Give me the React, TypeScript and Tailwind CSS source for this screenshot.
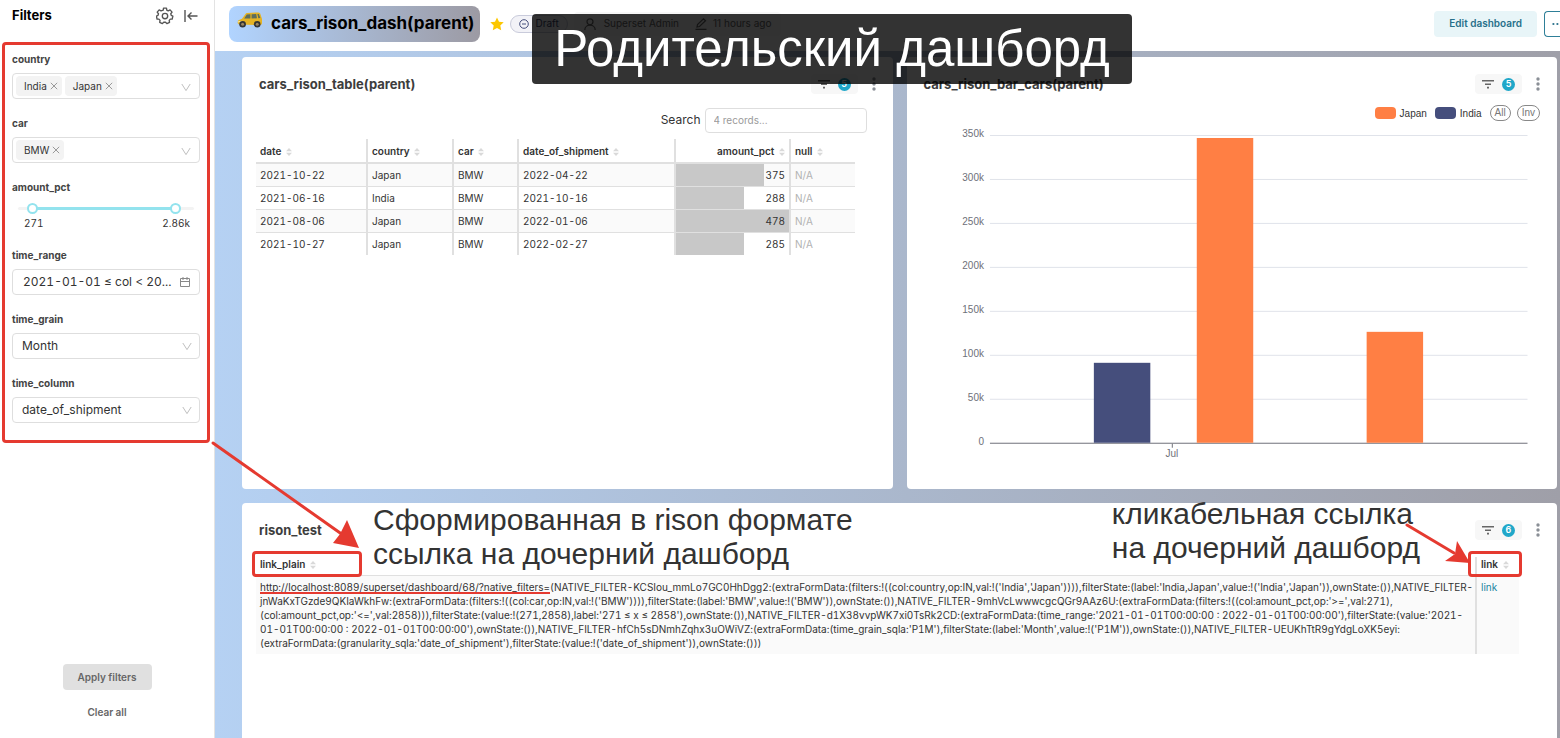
import { useState } from "react";
import type { ReactNode } from "react";

type ShipmentRow = {
    date: string;
    country: string;
    car: string;
    shipped: string;
    amount: number;
    bar: number;
};

const rows: ShipmentRow[] = [
    { date: "2021-10-22", country: "Japan", car: "BMW", shipped: "2022-04-22", amount: 375, bar: 78 },
    { date: "2021-06-16", country: "India", car: "BMW", shipped: "2021-10-16", amount: 288, bar: 60 },
    { date: "2021-08-06", country: "Japan", car: "BMW", shipped: "2022-01-06", amount: 478, bar: 100 },
    { date: "2021-10-27", country: "Japan", car: "BMW", shipped: "2022-02-27", amount: 285, bar: 60 },
];

const yLabels = ["350k", "300k", "250k", "200k", "150k", "100k", "50k", "0"];

const bars = [
    { x: 187, top: 237, color: "#454e7c" },
    { x: 290, top: 12, color: "#ff7f44" },
    { x: 460, top: 206, color: "#ff7f44" },
];

const baseUrl = "http://localhost:8089/superset/dashboard/68/?native_filters=";

const risonLines = [
    "(NATIVE_FILTER-KCSIou_mmLo7GC0HhDgg2:(extraFormData:(filters:!((col:country,op:IN,val:!('India','Japan')))),filterState:(label:'India,Japan',value:!('India','Japan')),ownState:()),NATIVE_FILTER-",
    "jnWaKxTGzde9QKIaWkhFw:(extraFormData:(filters:!((col:car,op:IN,val:!('BMW')))),filterState:(label:'BMW',value:!('BMW')),ownState:()),NATIVE_FILTER-9mhVcLwwwcgcQGr9AAz6U:(extraFormData:(filters:!((col:amount_pct,op:'>=',val:271),",
    "(col:amount_pct,op:'<=',val:2858))),filterState:(value:!(271,2858),label:'271 ≤ x ≤ 2858'),ownState:()),NATIVE_FILTER-d1X38vvpWK7xi0TsRk2CD:(extraFormData:(time_range:'2021-01-01T00:00:00 : 2022-01-01T00:00:00'),filterState:(value:'2021-",
    "01-01T00:00:00 : 2022-01-01T00:00:00'),ownState:()),NATIVE_FILTER-hfCh5sDNmhZqhx3uOWiVZ:(extraFormData:(time_grain_sqla:'P1M'),filterState:(label:'Month',value:!('P1M')),ownState:()),NATIVE_FILTER-UEUKhTtR9gYdgLoXK5eyi:",
    "(extraFormData:(granularity_sqla:'date_of_shipment'),filterState:(value:!('date_of_shipment')),ownState:()))",
];

function Chevron() {
    return (
        <svg viewBox="0 0 10 10" className="pointer-events-none absolute right-2 top-2 h-2.5 w-2.5" fill="none" stroke="#bfbfbf">
            <path d="M.8 2 5 8.6 9.2 2" />
        </svg>
    );
}

function Sorter() {
    return (
        <svg viewBox="0 0 6 8" className="ml-0.5 inline-block h-2 w-1.5" fill="#d9d9d9">
            <path d="M3 0 6 3.2H0zM3 8 0 4.8h6z" />
        </svg>
    );
}

function Tag({ children }: { children: ReactNode }) {
    return (
        <span className="flex h-5 items-center gap-[3px] rounded-sm bg-[#f3f3f3] pl-2 pr-1 text-[10px] text-[#333]">
            {children}
            <button type="button" aria-label={`Remove ${children}`}>
                <svg viewBox="0 0 8 8" className="h-2 w-2" fill="none" stroke="#999">
                    <path d="m.8.8 6.4 6.4M7.2.8.8 7.2" />
                </svg>
            </button>
        </span>
    );
}

function TagSelect({ label, tags }: { label: string; tags: string[] }) {
    return (
        <div className="mb-4">
            <div className="mb-1.5 text-[10px] font-bold leading-4 text-[#444]">{label}</div>
            <div className="relative flex h-[26px] items-center gap-[3px] rounded border border-[#dedede] px-[3px]">
                {tags.map((tag) => (
                    <Tag key={tag}>{tag}</Tag>
                ))}
                <Chevron />
            </div>
        </div>
    );
}

function PlainSelect({ label, value }: { label: string; value: string }) {
    return (
        <div className="mb-4">
            <label htmlFor={label} className="mb-1.5 block text-[10px] font-bold leading-4 text-[#444]">
                {label}
            </label>
            <div className="relative">
                <select
                    id={label}
                    className="block h-[26px] w-full appearance-none rounded border border-[#dedede] bg-white px-[9px] text-xs"
                >
                    <option>{value}</option>
                </select>
                <Chevron />
            </div>
        </div>
    );
}

function ChartCard({ title, count, className, children }: {
    title: string;
    count: number;
    className: string;
    children: ReactNode;
}) {
    return (
        <section className={`relative rounded-sm bg-white ${className}`}>
            <div className="flex h-[54px] items-center pl-[17px] pr-[17px]">
                <h2 className="flex-1 pt-0.5 text-[13px] font-bold text-[#3d3d3d]">{title}</h2>
                <button
                    type="button"
                    aria-label="Applied filters"
                    className="flex h-5 items-center gap-2 rounded bg-[#f7f7f7] px-[7px]"
                >
                    <svg viewBox="0 0 12 10" className="h-2.5 w-3" fill="#666">
                        <path d="M0 1h12v1.6H0zM3 4.4h6V6H3zM5 7.8h2v1.6H5z" />
                    </svg>
                    <span className="flex h-[13px] w-[13px] items-center justify-center rounded-full bg-[#20a7c9] text-[9px] font-semibold text-white">
                        {count}
                    </span>
                </button>
                <button type="button" aria-label="More options" className="ml-[14px]">
                    <svg viewBox="0 0 4 14" className="h-3.5 w-1" fill="#8a8f96">
                        <circle cx="2" cy="2" r="1.7" />
                        <circle cx="2" cy="7" r="1.7" />
                        <circle cx="2" cy="12" r="1.7" />
                    </svg>
                </button>
            </div>
            {children}
        </section>
    );
}

function CarIcon() {
    return (
        <svg viewBox="0 0 26 16" className="mb-2 h-4 w-[26px]">
            <path d="M1 8.5 5 6.8 8.5 2Q9 1.2 10 1l11-.6q1.6 0 2.2 1L25 7v4.5l-1 1.5-22-.5L.6 11z" fill="#e5b324" />
            <path d="m7.2 6.5 2.6-4 3.6-.3v4.4zM14.6 2.2l4.6-.3.8 4.4-5.4.3zM20.4 1.9h1.4l1.6 4.2-2.1.1z" fill="#5d6d5c" />
            <path d="M1.2 9.3 5 9v1l-3.8.4z" fill="#fff2a8" />
            <circle cx="5.6" cy="12.2" r="3.3" fill="#333" />
            <circle cx="5.6" cy="12.2" r="1.5" fill="#9a8560" />
            <circle cx="20.2" cy="12.2" r="3.3" fill="#333" />
            <circle cx="20.2" cy="12.2" r="1.5" fill="#9a8560" />
        </svg>
    );
}

function Sidebar() {
    return (
        <aside className="flex w-[215px] shrink-0 flex-col border-r border-[#e3e3e3] bg-white">
            <div className="flex h-[42px] items-center pb-2.5 pl-3 pr-4">
                <h1 className="flex-1 text-[13px] font-bold text-black">Filters</h1>
                <button type="button" aria-label="Filter settings">
                    <svg viewBox="0 0 24 24" className="h-[18px] w-[18px]" fill="none" stroke="#555" strokeWidth="1.8" strokeLinejoin="round">
                        <path d="M9.7 4.1 10 1.5h4l.3 2.6 2 1 2.5-1.2 2.6 3-1.7 2.1.6 2.2 2.2 1-.9 3.8-2.5.1-1.5 1.8.5 2.5-3.6 1.8-1.8-1.9h-2.4l-1.8 1.9-3.6-1.8.5-2.5-1.5-1.8-2.5-.1-.9-3.8 2.2-1 .6-2.2-1.7-2.1 2.6-3 2.5 1.2z" />
                        <circle cx="12" cy="12" r="3.6" />
                    </svg>
                </button>
                <button type="button" aria-label="Collapse filters" className="ml-2.5">
                    <svg viewBox="0 0 14 14" className="h-3.5 w-3.5" fill="none" stroke="#555" strokeWidth="1.4">
                        <path d="M1 1v12M13.5 7H4M7.5 3.5 4 7l3.5 3.5" />
                    </svg>
                </button>
            </div>

            <div className="ml-0.5 mr-1 rounded border-[3px] border-[#e53a30] px-[7px] pb-px pt-1.5">
                <TagSelect label="country" tags={["India", "Japan"]} />
                <TagSelect label="car" tags={["BMW"]} />

                <div className="mb-4">
                    <div className="text-[10px] font-bold leading-4 text-[#444]">amount_pct</div>
                    <div className="relative mx-1.5 mt-2 h-3">
                        <div className="absolute inset-x-0 top-1 h-[3px] rounded bg-[#f3f3f3]" />
                        <div className="absolute left-3.5 right-5 top-1 h-[3px] bg-[#93e3ee]" />
                        <input type="range" aria-label="amount_pct from" className="absolute inset-0 w-full opacity-0" />
                        <span className="absolute left-[9px] top-0 h-[11px] w-[11px] rounded-full border-2 border-[#93e3ee] bg-white" />
                        <span className="absolute right-[13px] top-0 h-[11px] w-[11px] rounded-full border-2 border-[#93e3ee] bg-white" />
                    </div>
                    <div className="flex justify-between pl-3 pr-2.5 text-[10px] leading-4 tabular-nums">
                        <span>271</span>
                        <span>2.86k</span>
                    </div>
                </div>

                <div className="mb-4">
                    <div className="mb-1.5 text-[10px] font-bold leading-4 text-[#444]">time_range</div>
                    <button
                        type="button"
                        className="flex h-[26px] w-full items-center justify-between whitespace-nowrap rounded border border-[#dedede] pl-2.5 pr-[9px] text-xs tabular-nums"
                    >
                        2021-01-01 ≤ col &lt; 20...
                        <svg viewBox="0 0 10 10" className="h-2.5 w-2.5" fill="none" stroke="#888">
                            <path d="M.5 1.5h9v8h-9zM.5 4.5h9M3 0v3M7 0v3" />
                        </svg>
                    </button>
                </div>

                <PlainSelect label="time_grain" value="Month" />
                <PlainSelect label="time_column" value="date_of_shipment" />
            </div>

            <div className="mt-auto flex flex-col items-center gap-3.5 pb-[18px] text-[10px] font-semibold text-[#666]">
                <button type="button" className="h-[26px] rounded bg-[#e0e0e0] px-[15px]">
                    Apply filters
                </button>
                <button type="button" className="leading-4">
                    Clear all
                </button>
            </div>
        </aside>
    );
}

function Header() {
    return (
        <header className="flex h-[51px] items-center bg-white pb-1 pl-3.5">
            <div className="flex h-9 items-center gap-2 rounded-lg bg-linear-to-r from-[#b1d4ff] to-[#9c9aa3] pl-2 pr-1.5 text-[17px] font-bold text-black">
                <CarIcon />
                <h1>cars_rison_dash(parent)</h1>
            </div>
            <button type="button" aria-label="Favorite" className="ml-2.5">
                <svg viewBox="0 0 14 14" className="h-3.5 w-3.5" fill="#fcc700">
                    <path d="m7 .4 2 4.3 4.7.6-3.4 3.2.9 4.7L7 10.9l-4.2 2.3.9-4.7L.3 5.3 5 4.7z" />
                </svg>
            </button>
            <span className="ml-1.5 flex h-[18px] items-center gap-1.5 rounded-full border border-[#c9cbdb] bg-[#f2f2f7] px-2 text-[10px] text-[#363f66]">
                <svg viewBox="0 0 10 10" className="h-2.5 w-2.5" fill="none" stroke="#454e7c">
                    <circle cx="5" cy="5" r="4.3" />
                    <path d="M3 5h4" />
                </svg>
                Draft
            </span>
            <div className="ml-1.5 flex h-6 items-center rounded bg-[#f7f7f7] px-2.5 text-[10px] text-[#666]">
                <svg viewBox="0 0 12 12" className="mr-2 h-3 w-3" fill="none" stroke="#666" strokeWidth="1.2">
                    <circle cx="6" cy="3.8" r="3" />
                    <path d="M.8 12c0-6.4 10.4-6.4 10.4 0" />
                </svg>
                Superset Admin
                <svg viewBox="0 0 12 12" className="ml-4 mr-1.5 h-3 w-3" fill="none" stroke="#666" strokeWidth="1.2">
                    <path d="M.5 11.4h11M2 9l.5-2.5L8.5.8l2 2-6 5.7z" />
                </svg>
                11 hours ago
            </div>
            <button type="button" className="ml-auto h-[26px] rounded bg-[#e8f5f8] px-[15px] text-[10px] font-semibold text-[#27708a]">
                Edit dashboard
            </button>
            <button
                type="button"
                aria-label="Dashboard actions"
                className="ml-[7px] h-[26px] w-4 overflow-hidden rounded-l border border-r-0 border-[#2e7f98] pl-[7px] text-left"
            >
                <svg viewBox="0 0 12 4" className="h-1 w-3" fill="#27708a">
                    <circle cx="1.4" cy="2" r="1.1" />
                    <circle cx="5.4" cy="2" r="1.1" />
                    <circle cx="9.4" cy="2" r="1.1" />
                </svg>
            </button>
        </header>
    );
}

function ShipmentTable() {
    const [query, setQuery] = useState("");
    const visible = rows.filter((row) => Object.values(row).join(" ").toLowerCase().includes(query.toLowerCase()));

    return (
        <div className="pl-3.5">
            <div className="mr-[26px] flex h-[18px] items-center justify-end gap-1">
                <label htmlFor="search" className="text-xs">Search</label>
                <input
                    id="search"
                    value={query}
                    onChange={(e) => setQuery(e.target.value)}
                    placeholder="4 records..."
                    className="h-[25px] w-[162px] rounded border border-[#dedede] px-2 text-[10px] placeholder:text-[#9a9a9a]"
                />
            </div>
            <div className="mr-[39px] mt-2.5">
                <table className="w-full table-fixed border-collapse text-[10px] leading-4 tabular-nums">
                    <colgroup>
                        <col className="w-[111px]" />
                        <col className="w-[86px]" />
                        <col className="w-[65px]" />
                        <col className="w-[157px]" />
                        <col className="w-[115px]" />
                        <col className="w-[65px]" />
                    </colgroup>
                    <thead>
                        <tr className="h-6 border-b-2 border-[#e0e0e0] text-left">
                            <th className="border-r-2 border-[#e0e0e0] px-1 font-semibold">date <Sorter /></th>
                            <th className="border-r-2 border-[#e0e0e0] px-1 font-semibold">country <Sorter /></th>
                            <th className="border-r-2 border-[#e0e0e0] px-1 font-semibold">car <Sorter /></th>
                            <th className="border-r-2 border-[#e0e0e0] px-1 font-semibold">date_of_shipment <Sorter /></th>
                            <th className="border-r-2 border-[#e0e0e0] px-1 text-right font-semibold">amount_pct <Sorter /></th>
                            <th className="px-1 font-semibold">null <Sorter /></th>
                        </tr>
                    </thead>
                    <tbody>
                        {visible.map((row) => (
                            <tr key={row.date} className="h-[23px] border-b border-[#e0e0e0] last:border-b-0 odd:bg-[#fafafa]">
                                <td className="border-r-2 border-[#e0e0e0] px-1">{row.date}</td>
                                <td className="border-r-2 border-[#e0e0e0] px-1">{row.country}</td>
                                <td className="border-r-2 border-[#e0e0e0] px-1">{row.car}</td>
                                <td className="border-r-2 border-[#e0e0e0] px-1">{row.shipped}</td>
                                <td className="relative border-r-2 border-[#e0e0e0] px-1 text-right">
                                    <div className="absolute inset-y-0 left-0 bg-[#c8c8c8]" style={{ width: `${row.bar}%` }} />
                                    <span className="relative">{row.amount}</span>
                                </td>
                                <td className="px-1 text-[#b2b2b2]">N/A</td>
                            </tr>
                        ))}
                    </tbody>
                </table>
            </div>
        </div>
    );
}

function BarChart() {
    return (
        <div className="relative font-['Liberation_Sans',sans-serif] text-[10px]">
            <div className="absolute -top-1.5 right-[17px] flex h-4 items-center">
                <span className="mr-1 h-3 w-[21px] rounded-sm bg-[#ff7f44]" />
                Japan
                <span className="ml-2 mr-1 h-3 w-[21px] rounded-sm bg-[#454e7c]" />
                India
                <button type="button" className="ml-2 h-4 rounded-full border border-[#888] px-1 leading-3 text-[#777]">All</button>
                <button type="button" className="ml-1.5 h-4 rounded-full border border-[#888] px-1 leading-3 text-[#777]">Inv</button>
            </div>
            <svg viewBox="0 0 651 350" className="block w-full pt-[15px]">
                {yLabels.map((label, i) => (
                    <g key={label}>
                        <line x1="83" x2="621" y1={9.5 + i * 44} y2={9.5 + i * 44} stroke={i === 7 ? "#6e7079" : "#e0e3ea"} />
                        <text x="77" y={11 + i * 44} textAnchor="end" fontSize="10" fill="#6e7079">{label}</text>
                    </g>
                ))}
                {bars.map((bar) => (
                    <rect key={bar.x} x={bar.x} y={bar.top} width="56.5" height={317 - bar.top} fill={bar.color} />
                ))}
                <path d="M265.5 318v4" stroke="#6e7079" />
                <text x="265" y="331" textAnchor="middle" fontSize="10" fill="#6e7079">Jul</text>
            </svg>
        </div>
    );
}

function RisonTable() {
    return (
        <div className="ml-3.5 mr-[38px]">
            <table className="w-full table-fixed border-collapse text-[10px] leading-[14px] tabular-nums">
                <thead>
                    <tr className="h-[18px] border-b border-[#e0e0e0] text-left align-top">
                        <th className="px-1 font-semibold">
                            <span className="relative">
                                link_plain <Sorter />
                                <span className="pointer-events-none absolute -left-2 -top-[7px] h-[26px] w-[110px] rounded border-[3px] border-[#e53a30]" />
                            </span>
                        </th>
                        <th className="w-[43px] border-l-2 border-[#e0e0e0] px-1 font-semibold">
                            <span className="relative">
                                link <Sorter />
                                <span className="pointer-events-none absolute -left-[13px] -top-[7px] h-[26px] w-[54px] rounded border-[3px] border-[#e53a30]" />
                            </span>
                        </th>
                    </tr>
                </thead>
                <tbody>
                    <tr className="bg-[#fafafa] align-top">
                        <td className="whitespace-nowrap px-1 py-1">
                            <span className="relative">
                                {baseUrl}
                                <span className="absolute inset-x-0 -bottom-px h-0.5 bg-[#e53a30]" />
                            </span>
                            {risonLines.map((line, i) => (
                                <span key={line}>
                                    {line}
                                    {i < risonLines.length - 1 && <br />}
                                </span>
                            ))}
                        </td>
                        <td className="border-l-2 border-[#e0e0e0] px-1 py-1">
                            <a href="#link" className="text-[#1a85a0]">link</a>
                        </td>
                    </tr>
                </tbody>
            </table>
        </div>
    );
}

export default function App() {
    return (
        <div className="relative flex min-h-screen overflow-hidden bg-white font-['Inter',sans-serif] text-[#333]">
            <Sidebar />

            <main className="flex min-w-0 flex-1 flex-col bg-linear-to-r from-[#b5d1f3] to-[#9f9fa8]">
                <Header />
                <div className="grid flex-1 grid-cols-2 grid-rows-[432px_1fr] gap-3.5 pl-[27px] pr-[3px] pt-1.5">
                    <ChartCard title="cars_rison_table(parent)" count={5} className="">
                        <ShipmentTable />
                    </ChartCard>
                    <ChartCard title="cars_rison_bar_cars(parent)" count={5} className="">
                        <BarChart />
                    </ChartCard>
                    <ChartCard title="rison_test" count={6} className="col-span-2 rounded-b-none">
                        <RisonTable />
                        <p className="absolute left-[131px] top-0 font-['Liberation_Sans',sans-serif] text-[30px] leading-[34px]">
                            Сформированная в rison формате
                            <br />
                            ссылка на дочерний дашборд
                        </p>
                        <p className="absolute -top-1.5 right-[137px] font-['Liberation_Sans',sans-serif] text-[30px] leading-[34px]">
                            кликабельная ссылка
                            <br />
                            на дочерний дашборд
                        </p>
                        <svg viewBox="0 0 66 42" className="absolute right-[87px] top-5 h-[42px] w-[66px]">
                            <path d="M3 2 50 30" stroke="#e53a30" strokeWidth="3" strokeLinecap="round" />
                            <path d="M53 18 66 40 41 38 51 31z" fill="#e53a30" />
                        </svg>
                    </ChartCard>
                </div>
            </main>

            <svg viewBox="0 0 150 108" className="pointer-events-none absolute left-[210px] top-[441px] h-[108px] w-[150px]">
                <path d="M3 2 133 94" stroke="#e53a30" strokeWidth="3" strokeLinecap="round" />
                <path d="M137 79 149 107 123 102 130 93z" fill="#e53a30" />
            </svg>

            <div className="absolute left-[532px] top-3.5 flex h-[70px] w-[600px] items-center justify-center rounded-sm bg-black/80 font-['Liberation_Sans',sans-serif] text-[51px] text-white">
                Родительский дашборд
            </div>
        </div>
    );
}
